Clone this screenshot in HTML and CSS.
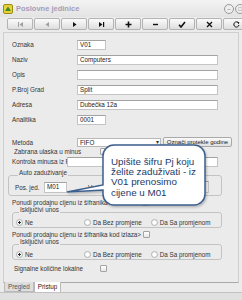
FILE: index.html
```html
<!DOCTYPE html>
<html lang="hr">
<head>
    <meta charset="UTF-8">
    <title>Poslovne jedinice</title>
    <link rel="stylesheet" href="styles.css">
</head>
<body>
    <div class="window">
        <div class="titlebar">
            <svg class="app-icon" width="10" height="10" viewBox="0 0 10 10">
                <rect x="0.5" y="0.5" width="9" height="9" rx="1.5" fill="#e8d23a" stroke="#9a8a10"/>
                <path d="M2 7 L5 2.5 L8 7 Z" fill="#3d8a2a"/>
            </svg>
            <span class="title">Poslovne jedinice</span>
            <div class="winbtns">
                <span class="winbtn">–</span>
                <span class="winbtn">□</span>
            </div>
        </div>

        <div class="toolbar">
            <button class="tbtn"><svg width="7" height="7" viewBox="0 0 7 7"><rect x="1" y="1" width="1" height="5" fill="#a0a0a0"/><path d="M6 1 L2.5 3.5 L6 6 Z" fill="#a0a0a0"/></svg></button>
            <button class="tbtn"><svg width="7" height="7" viewBox="0 0 7 7"><path d="M5 1 L1.5 3.5 L5 6 Z" fill="#a0a0a0"/></svg></button>
            <button class="tbtn"><svg width="7" height="7" viewBox="0 0 7 7"><path d="M2 1 L5.5 3.5 L2 6 Z" fill="#111"/></svg></button>
            <button class="tbtn"><svg width="7" height="7" viewBox="0 0 7 7"><path d="M1 1 L4.5 3.5 L1 6 Z" fill="#111"/><rect x="5" y="1" width="1.2" height="5" fill="#111"/></svg></button>
            <button class="tbtn"><svg width="7" height="7" viewBox="0 0 7 7"><path d="M3.5 0.5 V6.5 M0.5 3.5 H6.5" stroke="#111" stroke-width="1.6"/></svg></button>
            <button class="tbtn"><svg width="7" height="7" viewBox="0 0 7 7"><path d="M1 3.5 H6" stroke="#111" stroke-width="1.4"/></svg></button>
            <button class="tbtn"><svg width="8" height="7" viewBox="0 0 8 7"><path d="M1 3.8 L3 6 L7 1" fill="none" stroke="#111" stroke-width="1.6"/></svg></button>
            <button class="tbtn"><svg width="7" height="7" viewBox="0 0 7 7"><path d="M1 1 L6 6 M6 1 L1 6" stroke="#111" stroke-width="1.3"/></svg></button>
            <button class="tbtn"><svg width="7" height="7" viewBox="0 0 7 7"><path d="M5.6 2 A2.6 2.6 0 1 0 6 4" fill="none" stroke="#111" stroke-width="1"/><path d="M4.2 0.6 L6.4 1.4 L5.4 3.2 Z" fill="#111"/></svg></button>
        </div>

        <div class="panel">
            <div class="form">
                <div class="row"><span class="lbl">Oznaka</span><span class="inp short">V01</span></div>
                <div class="row"><span class="lbl">Naziv</span><span class="inp wide">Computers</span></div>
                <div class="row"><span class="lbl">Opis</span><span class="inp wide"></span></div>
                <div class="row"><span class="lbl">P.Broj Grad</span><span class="inp wide">Split</span></div>
                <div class="row"><span class="lbl">Adresa</span><span class="inp wide">Dubečka 12a</span></div>
                <div class="row"><span class="lbl">Analitika</span><span class="inp short">0001</span></div>

                <div class="row metoda">
                    <span class="lbl">Metoda</span>
                    <span class="select">FIFO<span class="arrow">▾</span></span>
                    <span class="btn">Označi protekle godine</span>
                </div>
                <div class="row chk-row">
                    <span class="lbl-chk">Zabrana ulaska u minus</span><span class="chk"></span>
                </div>
                <div class="row kontrola">
                    <span class="lbl-k">Kontrola minusa iz P.J.</span><span class="inp kinp"></span>
                </div>

                <fieldset class="group auto">
                    <legend>Auto zaduživanje</legend>
                    <div class="row sub">
                        <span class="lbl-pos">Pos. jed.</span><span class="inp pos">M01</span>
                        <span class="vrsta">Vrsta</span><span class="inp grey"></span>
                    </div>
                </fieldset>

                <div class="row line">Ponudi prodajnu cijenu iz šifranika kod ulaza&gt;<span class="chk after"></span></div>
                <fieldset class="group radios">
                    <legend>Isključivi unos</legend>
                    <div class="radio-row">
                        <span class="radio on">Ne</span>
                        <span class="radio r2">Da Bez promjene</span>
                        <span class="radio r3">Da Sa promjenom</span>
                    </div>
                </fieldset>

                <div class="row line">Ponudi prodajnu cijenu iz šifranika kod izlaza&gt;<span class="chk after"></span></div>
                <fieldset class="group radios">
                    <legend>Isključivi unos</legend>
                    <div class="radio-row">
                        <span class="radio on">Ne</span>
                        <span class="radio r2">Da Bez promjene</span>
                        <span class="radio r3">Da Sa promjenom</span>
                    </div>
                </fieldset>

                <div class="row chk-row signal">
                    <span class="lbl-chk">Signalne količine lokalne</span><span class="chk"></span>
                </div>
            </div>
        </div>

        <div class="tabs">
            <span class="tab">Pregled</span>
            <span class="tab active">Pristup</span>
        </div>
        <div class="statusbar"></div>

        <div class="callout">
            <svg width="150" height="72" viewBox="0 0 150 72">
                <defs>
                    <filter id="sh" x="-10%" y="-10%" width="130%" height="130%">
                        <feDropShadow dx="1" dy="1.5" stdDeviation="1" flood-color="#000" flood-opacity="0.25"/>
                    </filter>
                </defs>
                <path d="M54 5 H134 A11 11 0 0 1 145 16 V54 A11 11 0 0 1 134 65 H54 A11 11 0 0 1 43 54 V50 L7 52 L43 45 V16 A11 11 0 0 1 54 5 Z"
                      fill="#fff" stroke="#3d5f8e" stroke-width="1.5" filter="url(#sh)"/>
            </svg>
            <div class="callout-text">Upišite šifru Pj koju<br>želite zaduživati - iz<br>V01 prenosimo<br>cijene u M01</div>
        </div>
    </div>
</body>
</html>
```

FILE: styles.css
```css
body {
    margin: 0;
    background: #fff;
    font-family: 'Liberation Sans', Arial, sans-serif;
    font-size: 6.3px;
    color: #333;
}
.window {
    position: relative;
    width: 242px;
    height: 300px;
    background: #ebebeb;
    overflow: hidden;
    display: flex;
    flex-direction: column;
}
.titlebar {
    height: 17px;
    flex: none;
    display: flex;
    align-items: center;
    padding-left: 3px;
    background: linear-gradient(#f3f3f3, #e3e3e3);
}
.app-icon {
    flex: none;
}
.title {
    margin-left: 3px;
    font-weight: bold;
    font-size: 7.5px;
    color: #a59dba;
}
.winbtns {
    margin-left: auto;
    margin-right: -3px;
    display: flex;
    gap: 1px;
}
.winbtn {
    width: 8px;
    height: 8px;
    border: 1px solid #9a9a9a;
    border-radius: 50%;
    background: #eee;
    font-size: 6px;
    line-height: 8px;
    text-align: center;
    color: #666;
}
.toolbar {
    flex: none;
    display: flex;
    gap: 1px;
    padding: 1px 0 0 7px;
    height: 13px;
}
.tbtn {
    flex: none;
    width: 26px;
    height: 12px;
    padding: 0;
    border: 1px solid #b3b3b3;
    border-radius: 2px;
    background: linear-gradient(#fbfbfb, #dedede);
    display: flex;
    align-items: center;
    justify-content: center;
}
.panel {
    flex: 1;
    margin: 1px 3px 0 3px;
    border: 1px solid #cfcfcf;
    border-bottom-color: #a9a9a9;
}
.form {
    padding: 4px 0 0 8px;
    white-space: nowrap;
}
.row {
    display: flex;
    align-items: center;
    height: 15px;
}
.lbl {
    width: 65px;
    flex: none;
}
.inp {
    flex: none;
    box-sizing: border-box;
    height: 10px;
    padding: 0 2px;
    border: 1px solid #c4c4c4;
    border-top-color: #a2a2a2;
    background: #fff;
    line-height: 8px;
    color: #222;
}
.short {
    width: 29px;
}
.wide {
    width: 141px;
}
.metoda {
    height: 10px;
    margin-top: 10px;
}
.select {
    position: relative;
    box-sizing: border-box;
    width: 84px;
    height: 9px;
    padding: 0 2px;
    border: 1px solid #b8b8b8;
    background: #fff;
    line-height: 7px;
    color: #222;
}
.arrow {
    position: absolute;
    right: 1px;
    top: 0;
    font-size: 6px;
    color: #333;
}
.btn {
    box-sizing: border-box;
    width: 69px;
    height: 10px;
    margin-left: 2px;
    border: 1px solid #a9a9a9;
    border-radius: 2px;
    background: linear-gradient(#fafafa, #e0e0e0);
    text-align: center;
    line-height: 8px;
    font-size: 6px;
    color: #222;
}
.chk-row {
    height: 9px;
}
.lbl-chk {
    width: 86px;
    padding-left: 2px;
    flex: none;
}
.chk {
    flex: none;
    box-sizing: border-box;
    width: 7px;
    height: 7px;
    border: 1px solid #a4a4a4;
    border-radius: 1px;
    background: linear-gradient(#fff, #e6e6e6);
}
.chk.after {
    margin-left: 2px;
}
.kontrola {
    height: 11px;
}
.lbl-k {
    width: 55px;
    flex: none;
}
.kinp {
    width: 151px;
}
.group {
    margin: 0;
    padding: 0;
    min-width: 0;
    border: 1px solid #c3c3c3;
    border-radius: 3px;
}
.group legend {
    padding: 0 1px 5px 1px;
    margin-left: 3px;
    line-height: 7px;
    height: 7px;
}
.auto {
    margin: 2px 16px 0 -4px;
    padding: 0 0 2px 6px;
}
.sub {
    height: 12px;
}
.lbl-pos {
    width: 29px;
    flex: none;
}
.pos {
    width: 23px;
    height: 11px;
}
.vrsta {
    margin-left: 21px;
    width: 26px;
}
.grey {
    width: 95px;
    height: 12px;
    background: #f1f1f1;
}
.line {
    height: 8px;
    margin-top: 2px;
}
.radios {
    margin: 0 16px 0 0;
    padding: 0 0 0 3px;
}
.radio-row {
    display: flex;
    align-items: center;
    height: 9px;
}
.radio {
    flex: none;
    display: flex;
    align-items: center;
    gap: 2px;
}
.radio::before {
    content: "";
    box-sizing: border-box;
    width: 7px;
    height: 7px;
    border: 1px solid #b4b4b4;
    border-radius: 50%;
    background: radial-gradient(circle, #fff 40%, #e2e2e2);
}
.radio.on::before {
    background: radial-gradient(circle, #222 28%, #fff 36%, #e2e2e2);
}
.r2 {
    margin-left: 51px;
}
.r3 {
    margin-left: 9px;
}
.signal {
    margin-top: 4px;
}
.tabs {
    flex: none;
    display: flex;
    height: 10px;
    padding-left: 4px;
    margin-top: -1px;
}
.tab {
    box-sizing: border-box;
    height: 10px;
    padding: 0 3px;
    border: 1px solid #b9b9b9;
    border-top: none;
    background: #dedede;
    color: #555;
    line-height: 9px;
}
.tab.active {
    background: #fff;
    color: #222;
    height: 11px;
}
.statusbar {
    flex: none;
    height: 7px;
    border-top: 1px solid #c2c2c2;
    background: #e0e0e0;
}
.callout {
    position: absolute;
    left: 60px;
    top: 140px;
    width: 150px;
    height: 72px;
}
.callout svg {
    display: block;
}
.callout-text {
    position: absolute;
    left: 51px;
    top: 17px;
    font-size: 9.8px;
    line-height: 10.2px;
    color: #243a66;
    white-space: nowrap;
}
```
